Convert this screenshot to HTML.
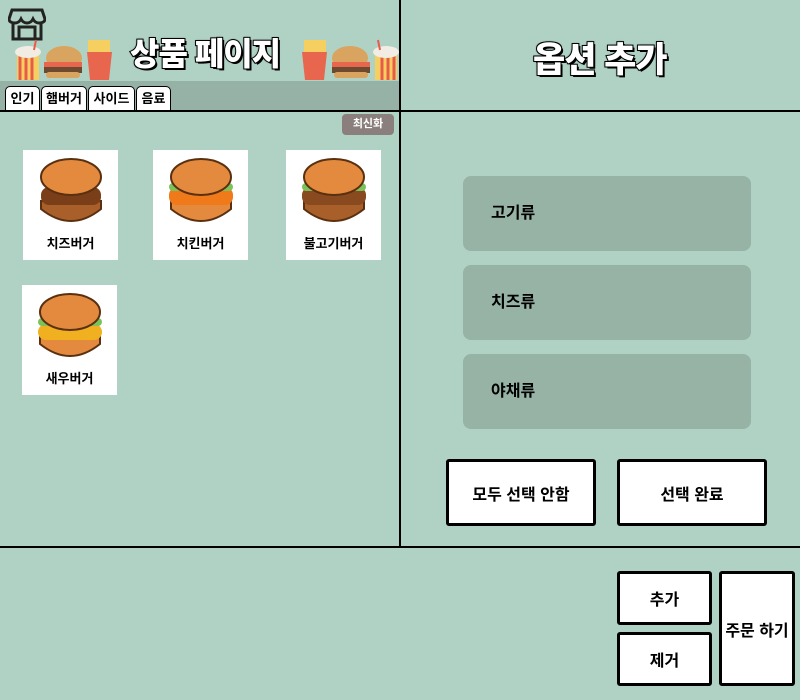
<!DOCTYPE html>
<html><head><meta charset="utf-8"><style>
*{margin:0;padding:0;box-sizing:border-box}
body{width:800px;height:700px;background:#b0d2c4;position:relative;overflow:hidden;font-family:"Liberation Sans","Noto Sans CJK KR",sans-serif;}
.a{position:absolute}
.vl{left:399px;top:0;width:2px;height:547px;background:#000}
.hl{left:0;width:800px;height:2px;background:#000}
.title{font-weight:900;color:#fff;-webkit-text-stroke:2px #000;paint-order:stroke fill;text-shadow:0 0 2px #000,2px 2px 0 #000}
.strip{left:0;top:81px;width:399px;height:30px;background:#96b2a6}
.tab{top:86px;height:25px;background:#fff;border:1px solid #000;border-radius:5px 5px 0 0;font-size:13px;font-weight:bold;line-height:23px;text-align:center}
.card{background:#fff;width:95px;height:110px;text-align:center;font-size:13px;font-weight:bold}
.card span{position:absolute;left:0;right:0;bottom:8px}
.bg{position:absolute;left:12px;top:7px;width:72px;height:72px}
.opt{left:463px;width:288px;height:75px;background:#96b3a6;border-radius:8px;font-size:16px;font-weight:bold;line-height:75px;padding-left:28px}
.btn{background:#fff;border:3px solid #000;border-radius:3px;font-size:16px;font-weight:bold;display:flex;align-items:center;justify-content:center}
</style></head><body>
<div class="a strip"></div>
<svg class="a" style="left:8px;top:7px" width="38" height="34" viewBox="0 0 38 34" fill="none" stroke="#222" stroke-width="3"><path d="M4 3h30l3 9c0 3-3 4-6 4s-5-2-6-4c-1 2-3 4-6 4s-5-2-6-4c-1 2-3 4-6 4s-6-1-6-4z"/><path d="M5 16v16h28V16"/><path d="M11 32V20h16v12"/></svg>
<div class="a title" style="left:130px;top:29px;font-size:32px;letter-spacing:-1px">상품 페이지</div>
<div class="a title" style="left:533px;top:32px;font-size:35px;letter-spacing:-1px">옵션 추가</div>
<svg class="a" style="left:12px;top:38px" width="105" height="43" viewBox="0 0 105 43"><rect x="5" y="12" width="22" height="30" fill="#f5d061"/><path d="M8 14v28M14 14v28M20 14v28" stroke="#e85b4a" stroke-width="3"/><ellipse cx="16" cy="14" rx="13" ry="6" fill="#f1ece4"/><line x1="22" y1="12" x2="24" y2="2" stroke="#e85b4a" stroke-width="2"/><ellipse cx="52" cy="20" rx="18" ry="12" fill="#d9a45f"/><rect x="32" y="24" width="38" height="6" fill="#e8664e"/><rect x="32" y="29" width="38" height="6" fill="#6b4a2f"/><rect x="34" y="34" width="34" height="6" rx="3" fill="#d9a45f"/><path d="M75 14l25 0-3 28h-19z" fill="#e8664e"/><rect x="76" y="2" width="22" height="12" fill="#f5d061"/></svg>
<svg class="a" style="left:297px;top:38px;transform:scaleX(-1)" width="105" height="43" viewBox="0 0 105 43"><rect x="5" y="12" width="22" height="30" fill="#f5d061"/><path d="M8 14v28M14 14v28M20 14v28" stroke="#e85b4a" stroke-width="3"/><ellipse cx="16" cy="14" rx="13" ry="6" fill="#f1ece4"/><line x1="22" y1="12" x2="24" y2="2" stroke="#e85b4a" stroke-width="2"/><ellipse cx="52" cy="20" rx="18" ry="12" fill="#d9a45f"/><rect x="32" y="24" width="38" height="6" fill="#e8664e"/><rect x="32" y="29" width="38" height="6" fill="#6b4a2f"/><rect x="34" y="34" width="34" height="6" rx="3" fill="#d9a45f"/><path d="M75 14l25 0-3 28h-19z" fill="#e8664e"/><rect x="76" y="2" width="22" height="12" fill="#f5d061"/></svg>
<div class="a tab" style="left:5px;width:35px">인기</div>
<div class="a tab" style="left:41px;width:46px">햄버거</div>
<div class="a tab" style="left:88px;width:47px">사이드</div>
<div class="a tab" style="left:136px;width:35px">음료</div>
<div class="a hl" style="top:110px"></div>
<div class="a vl"></div>
<div class="a" style="left:342px;top:114px;width:52px;height:21px;background:#8a7f7d;border-radius:4px;color:#fff;font-size:11px;font-weight:bold;text-align:center;line-height:21px">최신화</div>

<div class="a card" style="left:23px;top:150px"><svg class="bg" viewBox="0 0 72 72"><path d="M6 52q30 24 60 0v-8H6z" fill="#a85f2a" stroke="#5a3010" stroke-width="2"/><rect x="6" y="30" width="60" height="18" rx="8" fill="#7a3e18"/><ellipse cx="36" cy="20" rx="30" ry="18" fill="#e48a3e" stroke="#5a3010" stroke-width="2"/></svg><span>치즈버거</span></div>
<div class="a card" style="left:153px;top:150px"><svg class="bg" viewBox="0 0 72 72"><path d="M6 52q30 24 60 0v-8H6z" fill="#e48a3e" stroke="#5a3010" stroke-width="2"/><rect x="4" y="30" width="64" height="18" rx="8" fill="#f07a1a"/><rect x="4" y="26" width="64" height="8" rx="4" fill="#7cc25a"/><ellipse cx="36" cy="20" rx="30" ry="18" fill="#e48a3e" stroke="#5a3010" stroke-width="2"/></svg><span>치킨버거</span></div>
<div class="a card" style="left:286px;top:150px"><svg class="bg" viewBox="0 0 72 72"><path d="M6 52q30 24 60 0v-8H6z" fill="#a85f2a" stroke="#5a3010" stroke-width="2"/><rect x="4" y="30" width="64" height="18" rx="8" fill="#8a4a20"/><rect x="4" y="26" width="64" height="8" rx="4" fill="#7cc25a"/><ellipse cx="36" cy="20" rx="30" ry="18" fill="#e48a3e" stroke="#5a3010" stroke-width="2"/></svg><span>불고기버거</span></div>
<div class="a card" style="left:22px;top:285px"><svg class="bg" viewBox="0 0 72 72"><path d="M6 52q30 24 60 0v-8H6z" fill="#e48a3e" stroke="#5a3010" stroke-width="2"/><rect x="4" y="32" width="64" height="16" rx="8" fill="#f0b020"/><rect x="4" y="26" width="64" height="8" rx="4" fill="#7cc25a"/><ellipse cx="36" cy="20" rx="30" ry="18" fill="#e48a3e" stroke="#5a3010" stroke-width="2"/></svg><span>새우버거</span></div>

<div class="a opt" style="top:176px">고기류</div>
<div class="a opt" style="top:265px">치즈류</div>
<div class="a opt" style="top:354px">야채류</div>
<div class="a btn" style="left:446px;top:459px;width:150px;height:67px">모두 선택 안함</div>
<div class="a btn" style="left:617px;top:459px;width:150px;height:67px">선택 완료</div>
<div class="a hl" style="top:546px"></div>
<div class="a btn" style="left:617px;top:571px;width:95px;height:54px">추가</div>
<div class="a btn" style="left:617px;top:632px;width:95px;height:54px">제거</div>
<div class="a btn" style="left:719px;top:571px;width:76px;height:115px">주문 하기</div>
</body></html>
